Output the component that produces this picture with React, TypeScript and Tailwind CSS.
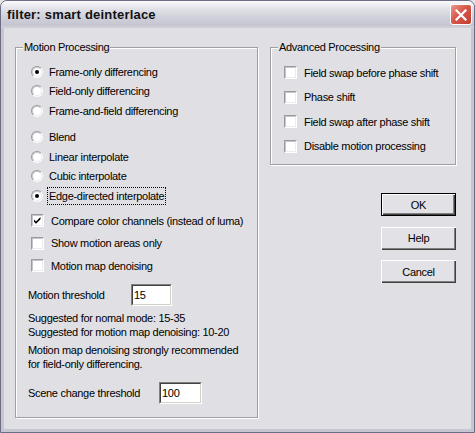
import type { ReactNode } from "react";

function Radio({ checked, label, focus }: { checked?: boolean; label: string; focus?: boolean }) {
  return (
    <div className="flex h-[19.5px] items-center pl-[3px]">
      <span className="flex h-[12px] w-[12px] flex-none rounded-full border border-t-[#9a9aa0] border-l-[#9a9aa0] border-r-white border-b-white">
        <span className="flex h-full w-full items-center justify-center rounded-full border border-t-[#c4c4ca] border-l-[#c4c4ca] border-r-[#ecebef] border-b-[#ecebef] bg-white">
          {checked && <span className="h-[4px] w-[4px] rounded-full bg-black" />}
        </span>
      </span>
      <span
        className={`ml-[5px] px-[1px] leading-[16px] ${focus ? "outline outline-1 outline-dotted outline-black" : ""}`}
      >
        {label}
      </span>
    </div>
  );
}

function Check({ checked, label, rowClass }: { checked?: boolean; label: string; rowClass: string }) {
  return (
    <div className={`flex items-center ${rowClass}`}>
      <span className="h-[13px] w-[13px] flex-none border border-t-[#9a9aa0] border-l-[#9a9aa0] border-r-white border-b-white">
        <span className="block h-full w-full border border-t-[#c4c4ca] border-l-[#c4c4ca] border-r-[#ecebef] border-b-[#ecebef] bg-white">
          {checked && (
            <svg width="9" height="9" viewBox="0 0 9 9" className="block">
              <path d="M1 3.5 L3 5.5 L7.5 1 L7.5 3.2 L3 7.7 L1 5.7 Z" fill="#000" />
            </svg>
          )}
        </span>
      </span>
      <span className="ml-[6px] px-[1px]">{label}</span>
    </div>
  );
}

function Group({ label, className, children }: { label: string; className: string; children: ReactNode }) {
  return (
    <div
      className={`relative flex-none border border-[#a0a0a4] shadow-[inset_1px_1px_0_#fff,1px_1px_0_#fff] ${className}`}
    >
      <span className="absolute left-[7px] top-[-7px] bg-[#e0dfe3] px-[1px] leading-[13px]">{label}</span>
      {children}
    </div>
  );
}

function Field({ value, width }: { value: string; width: string }) {
  return (
    <div
      className={`h-[22px] ${width} border border-t-[#808080] border-l-[#808080] border-r-white border-b-white`}
    >
      <div className="h-full w-full border border-t-[#404040] border-l-[#404040] border-r-[#d4d0c8] border-b-[#d4d0c8] bg-white px-[1px] leading-[18px]">
        {value}
      </div>
    </div>
  );
}

function Button({ label, primary }: { label: string; primary?: boolean }) {
  return (
    <button
      className={`h-[23px] w-[75px] bg-[#e2e1e5] text-center leading-[20px] shadow-[inset_1px_1px_0_#fff,inset_-1px_-1px_0_#404040,inset_-2px_-2px_0_#808080] ${primary ? "border border-black" : ""}`}
    >
      {label}
    </button>
  );
}

export default function App() {
  return (
    <div className="h-[433px] w-[475px] bg-[#e6e6ea] font-['Liberation_Sans',Arial,sans-serif] text-[11px] tracking-[-0.3px] text-black">
      <div className="flex h-full flex-col rounded-t-[7px] border border-[#6c6c84] bg-[#c6c6d2]">
        {/* title bar */}
        <div className="flex h-[27px] flex-none items-center justify-between rounded-t-[6px] bg-[linear-gradient(to_bottom,#fbfbfd_0%,#e4e4eb_25%,#d0d0da_60%,#c6c6d2_90%,#d2d2dc_100%)] pl-[6px] pr-[2px]">
          <span className="text-[13px] font-bold tracking-[0.2px] text-[#111]">filter: smart deinterlace</span>
          <span className="flex h-[21px] w-[22px] items-center justify-center rounded-[3px] border border-white bg-[linear-gradient(135deg,#eb9a8c_0%,#d6584a_45%,#c23f33_100%)]">
            <svg width="12" height="12" viewBox="0 0 12 12">
              <path d="M1.5 1.5 L10.5 10.5 M10.5 1.5 L1.5 10.5" stroke="#fff" strokeWidth="2.2" strokeLinecap="square" />
            </svg>
          </span>
        </div>

        {/* client area */}
        <div className="mx-[3px] mb-[3px] flex flex-1 bg-[#e0dfe3] pl-[11px] pt-[19px]">
          <Group label="Motion Processing" className="h-[371px] w-[243px] pl-[12px] pt-[14px]">
            <Radio checked label="Frame-only differencing" />
            <Radio label="Field-only differencing" />
            <Radio label="Frame-and-field differencing" />
            <div className="mt-[7px]">
              <Radio label="Blend" />
              <Radio label="Linear interpolate" />
              <Radio label="Cubic interpolate" />
              <Radio checked focus label="Edge-directed interpolate" />
            </div>
            <div className="mt-[4px] pl-[3px]">
              <Check checked rowClass="h-[22.5px]" label="Compare color channels (instead of luma)" />
              <Check rowClass="h-[22.5px]" label="Show motion areas only" />
              <Check rowClass="h-[22.5px]" label="Motion map denoising" />
            </div>
            <div className="mt-[7px] flex items-center">
              <span className="w-[103px]">Motion threshold</span>
              <Field value="15" width="w-[41px]" />
            </div>
            <div className="mt-[5px] leading-[14px]">
              <div>Suggested for nomal mode: 15-35</div>
              <div>Suggested for motion map denoising: 10-20</div>
              <div className="mt-[4px]">Motion map denoising strongly recommended</div>
              <div>for field-only differencing.</div>
            </div>
            <div className="mt-[11px] flex items-center">
              <span className="w-[131px]">Scene change threshold</span>
              <Field value="100" width="w-[43px]" />
            </div>
          </Group>

          <div className="ml-[12px] flex w-[186px] flex-col">
            <Group label="Advanced Processing" className="h-[118px] pl-[13px] pt-[12.5px]">
              <Check rowClass="h-[24.5px]" label="Field swap before phase shift" />
              <Check rowClass="h-[24.5px]" label="Phase shift" />
              <Check rowClass="h-[24.5px]" label="Field swap after phase shift" />
              <Check rowClass="h-[24.5px]" label="Disable motion processing" />
            </Group>
            <div className="mt-[28px] flex flex-col items-end gap-[10.5px]">
              <Button primary label="OK" />
              <Button label="Help" />
              <Button label="Cancel" />
            </div>
          </div>
        </div>
      </div>
    </div>
  );
}
